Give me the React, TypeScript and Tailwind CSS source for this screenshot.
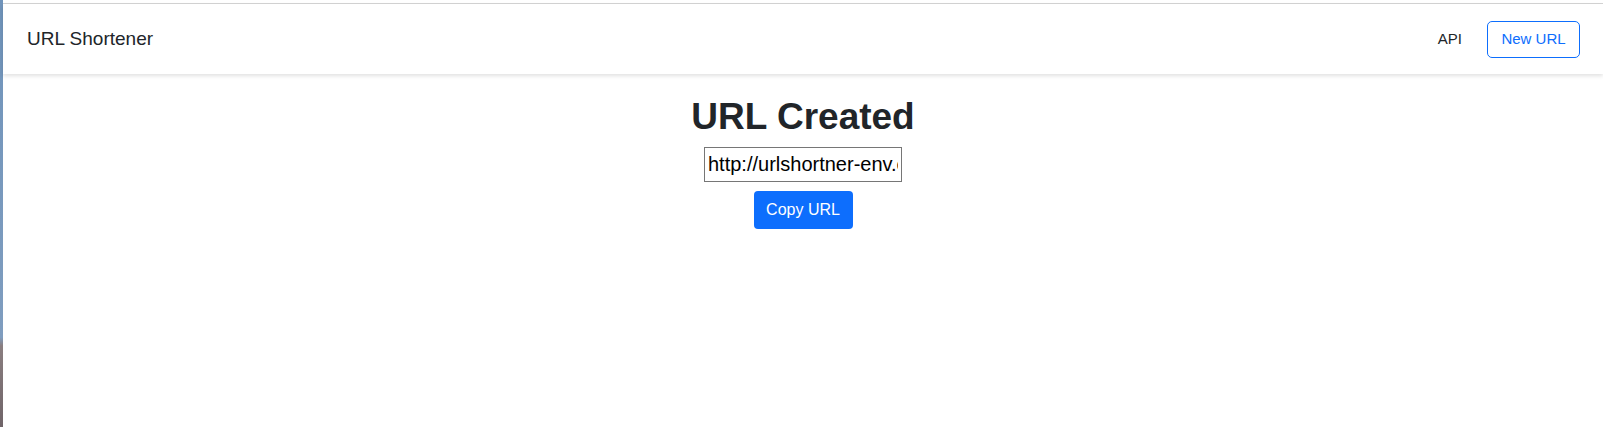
import React from "react";

export default function App() {
  return (
    <div className="flex min-h-[427px] w-full bg-white" style={{ fontFamily: '"Liberation Sans", Arial, sans-serif' }}>
      <div className="w-[3px] shrink-0 bg-[linear-gradient(to_bottom,#7094bb_0%,#7f9dbf_79%,#8a7e80_81%,#6f6468_100%)]" />
      <div className="flex flex-1 flex-col">
        <div className="h-[3px] bg-white" />
        <div className="h-px bg-[#d4d4d4]" />
        <nav className="relative z-10 flex h-[70px] items-center justify-between bg-white pl-[24px] pr-[23px] shadow-[0_2px_4px_rgba(0,0,0,0.12)]">
          <span className="text-[19px] text-[#212529]">URL Shortener</span>
          <div className="flex items-center gap-[25px]">
            <span className="text-[15px] text-[#212529]">API</span>
            <button className="h-[37px] w-[93px] rounded-[5px] border border-[#0d6efd] bg-white text-[15px] text-[#0d6efd]">
              New URL
            </button>
          </div>
        </nav>
        <main className="flex flex-col items-center">
          <h1 className="mt-[21px] text-[37px] font-bold leading-[1.2] text-[#212529]">URL Created</h1>
          <input
            readOnly
            value="http://urlshortner-env.eba-example.us-east-1.elasticbeanstalk.com/abc123"
            className="mt-[8px] h-[35px] w-[198px] border border-[#767676] bg-white px-[3px] text-[20px] text-black outline-none"
            style={{ fontFamily: '"Liberation Sans", Arial, sans-serif' }}
          />
          <button className="mt-[9px] h-[38px] w-[99px] rounded-[4px] bg-[#0d6efd] text-[16px] text-white">
            Copy URL
          </button>
        </main>
      </div>
    </div>
  );
}
